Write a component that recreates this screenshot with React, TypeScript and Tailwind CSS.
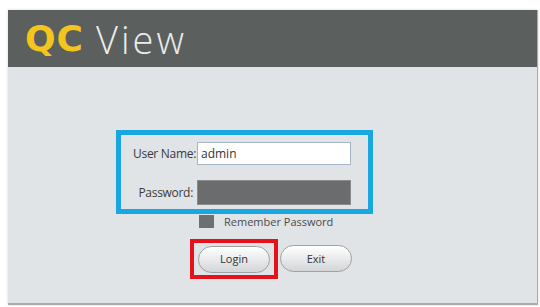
import React from "react";

export default function App() {
  return (
    <div className="w-[540px] h-[307px] bg-white pt-[10px] pl-[8px] overflow-hidden" style={{ fontFamily: '"Open Sans", "Liberation Sans", sans-serif' }}>
      <div className="w-[530px] h-[295px] flex flex-col bg-[#e1e4e6] border-b-2 border-r border-[#a9acae] shadow-[0_0_3px_rgba(0,0,0,0.15)]">
        <div className="h-[57px] bg-[#5b5f5e] flex items-center pl-[17px] gap-[12px] shrink-0">
          <span className="text-[36px] font-bold text-[#f4c51c] leading-none tracking-[1px]" style={{ fontFamily: '"DejaVu Sans", sans-serif' }}>QC</span>
          <span className="text-[38px] font-light text-[#ebebeb] leading-none tracking-[3px]" style={{ fontFamily: '"Open Sans", sans-serif' }}>View</span>
        </div>

        <div className="flex flex-col pl-[108px] pt-[63px]">
          <div className="w-[257px] h-[84px] border-[5px] border-[#19a7e2] flex flex-col pt-[7px] gap-[15px]">
            <div className="flex items-center">
              <label className="w-[76px] text-right pr-[1px] text-[12px] tracking-[-0.3px] text-[#3a3a3a]">User Name:</label>
              <input defaultValue="admin" className="w-[154px] h-[23px] bg-white border border-[#a7b6c4] px-[3px] text-[12px] text-[#333] outline-none" />
            </div>
            <div className="flex items-center">
              <label className="w-[76px] text-right pr-[4px] text-[12px] tracking-[-0.3px] text-[#3a3a3a]">Password:</label>
              <input type="password" className="w-[154px] h-[25px] bg-[#6b6c6d] border border-[#8a8b8c] outline-none" />
            </div>
          </div>

          <div className="flex items-center pl-[83px] mt-[1px] gap-[10px]">
            <div className="w-[15px] h-[13px] bg-[#6d7073]" />
            <span className="text-[11px] text-[#4a4a4a] leading-none">Remember Password</span>
          </div>

          <div className="flex items-center pl-[74px] mt-[11px] gap-[2px]">
            <div className="border-[4px] border-[#e5121b] px-[4px] py-[2px]">
              <button className="w-[72px] h-[27px] rounded-full border border-[#9ea2a5] bg-gradient-to-b from-white to-[#d3d6d8] text-[11px] text-[#333]">Login</button>
            </div>
            <button className="w-[72px] h-[27px] rounded-full border border-[#9ea2a5] bg-gradient-to-b from-white to-[#d3d6d8] text-[11px] text-[#333]">Exit</button>
          </div>
        </div>
      </div>
    </div>
  );
}
